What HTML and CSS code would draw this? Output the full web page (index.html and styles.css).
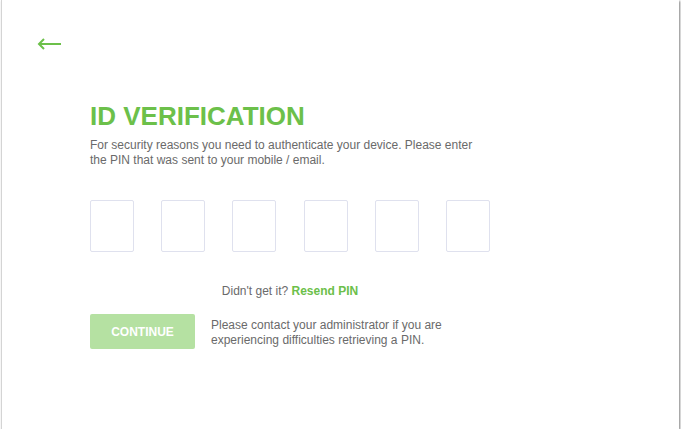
FILE: index.html
```html
<!DOCTYPE html>
<html>
<head>
<meta charset="utf-8">
<link rel="stylesheet" href="styles.css">
</head>
<body>
<div class="window">
  <div class="back">
    <svg width="26" height="14" viewBox="0 0 26 14"><path d="M25 7H3M8 2L3 7l5 5" fill="none" stroke="#6cc04a" stroke-width="2"/></svg>
  </div>
  <main class="content">
    <h1 class="title">ID VERIFICATION</h1>
    <p class="intro">For security reasons you need to authenticate your device. Please enter<br>the PIN that was sent to your mobile / email.</p>
    <div class="pins">
      <div class="pin"></div><div class="pin"></div><div class="pin"></div><div class="pin"></div><div class="pin"></div><div class="pin"></div>
    </div>
    <p class="resend">Didn't get it? <a class="resend-link">Resend PIN</a></p>
    <div class="actions">
      <button class="continue">CONTINUE</button>
      <p class="help">Please contact your administrator if you are<br>experiencing difficulties retrieving a PIN.</p>
    </div>
  </main>
</div>
</body>
</html>
```
FILE: styles.css
```css
html, body { margin: 0; padding: 0; background: #fff; }
body { font-family: "Liberation Sans", Arial, sans-serif; }
.window {
  width: 678px;
  height: 429px;
  margin-left: 1px;
  border-left: 1px solid #d4d4d4;
  box-shadow: 1px 1px 2px rgba(0,0,0,0.5);
  box-sizing: border-box;
  padding: 37px 0 0 34px;
}
.back { height: 14px; display: flex; }
.content { width: 400px; margin-left: 54px; padding-top: 50px; }
.title {
  margin: 0;
  font-size: 26px;
  line-height: 30px;
  font-weight: bold;
  color: #6cc04a;
}
.intro {
  margin: 7px 0 0;
  font-size: 12px;
  line-height: 15px;
  color: #6a6a6a;
  white-space: nowrap;
}
.pins { display: flex; justify-content: space-between; margin-top: 32px; }
.pin {
  width: 44px; height: 52px;
  border: 1px solid #dfe1ee;
  border-radius: 2px;
  box-sizing: border-box;
}
.resend {
  margin: 32px 0 0;
  text-align: center;
  font-size: 12px;
  line-height: 15px;
  color: #6a6a6a;
}
.resend-link { color: #6cc04a; font-weight: bold; }
.actions { display: flex; align-items: flex-start; gap: 16px; margin-top: 15px; }
.continue {
  width: 105px; height: 35px;
  border: none; border-radius: 2px;
  background: #b5e1a2;
  color: #fff;
  font-family: "Liberation Sans", Arial, sans-serif;
  font-weight: bold;
  font-size: 12px;
  padding: 0;
  flex: none;
}
.help {
  margin: 4px 0 0;
  font-size: 12px;
  line-height: 15px;
  color: #6a6a6a;
  white-space: nowrap;
}
```
